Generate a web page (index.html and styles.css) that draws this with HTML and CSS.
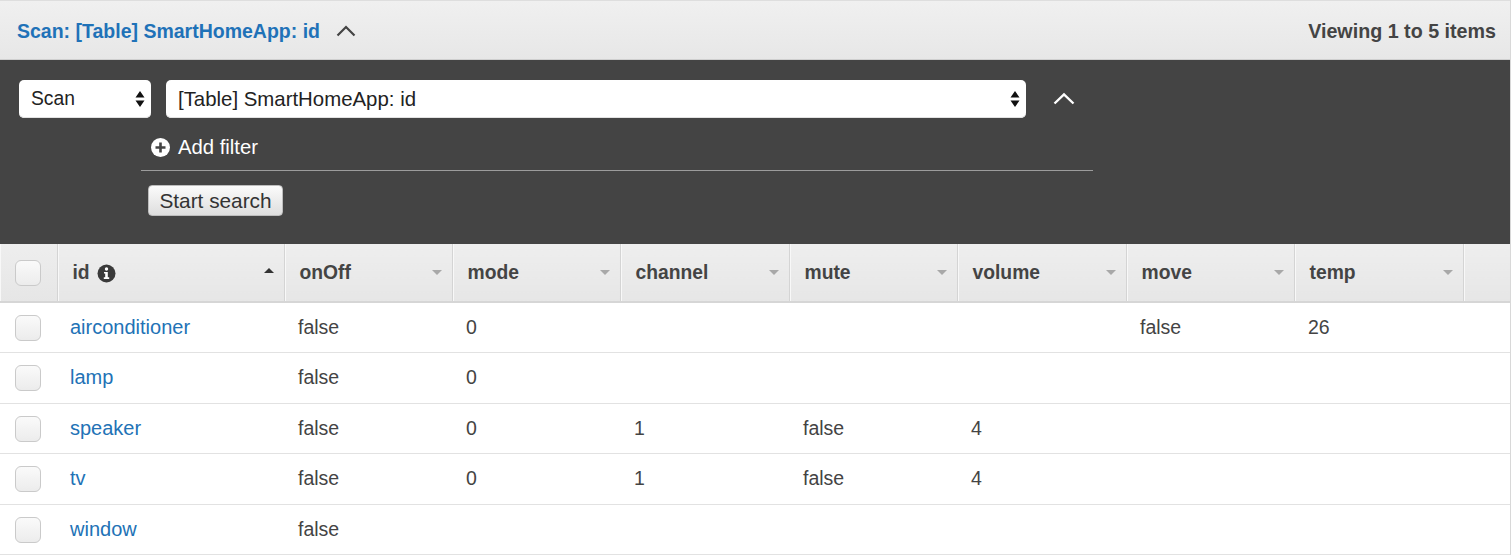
FILE: index.html
```html
<!DOCTYPE html>
<html lang="en">
<head>
<meta charset="utf-8">
<title>Scan: [Table] SmartHomeApp: id</title>
<link rel="stylesheet" href="styles.css">
</head>
<body>
<div class="app">
  <header class="topbar">
    <div class="title">
      <span class="title-text">Scan: [Table] SmartHomeApp: id</span>
      <svg class="chev-dark" width="20" height="12" viewBox="0 0 20 12"><path d="M1.5 10.5 L10 2 L18.5 10.5" fill="none" stroke="#444" stroke-width="2.2"/></svg>
    </div>
    <div class="count">Viewing 1 to 5 items</div>
  </header>

  <section class="query">
    <div class="query-row">
      <div class="select select-op">
        <span>Scan</span>
        <svg class="updown" width="10" height="18" viewBox="0 0 10 18"><path d="M5 1 L9.5 7.5 H0.5 Z M5 17 L9.5 10.5 H0.5 Z" fill="#111"/></svg>
      </div>
      <div class="select select-table">
        <span>[Table] SmartHomeApp: id</span>
        <svg class="updown" width="10" height="18" viewBox="0 0 10 18"><path d="M5 1 L9.5 7.5 H0.5 Z M5 17 L9.5 10.5 H0.5 Z" fill="#111"/></svg>
      </div>
      <svg class="chev-light" width="22" height="13" viewBox="0 0 22 13"><path d="M1.5 11.5 L11 2.5 L20.5 11.5" fill="none" stroke="#fff" stroke-width="2.4"/></svg>
    </div>
    <div class="filters">
      <div class="add-filter">
        <svg width="19" height="19" viewBox="0 0 19 19"><circle cx="9.5" cy="9.5" r="9.5" fill="#fff"/><path d="M9.5 4.5 V14.5 M4.5 9.5 H14.5" stroke="#444" stroke-width="2.6"/></svg>
        <span>Add filter</span>
      </div>
      <div class="divider"></div>
      <button class="btn">Start search</button>
    </div>
  </section>

  <table class="grid">
    <colgroup>
      <col style="width:57px">
      <col style="width:227px">
      <col style="width:168px">
      <col style="width:168px">
      <col style="width:169px">
      <col style="width:168px">
      <col style="width:169px">
      <col style="width:168px">
      <col style="width:169px">
      <col>
    </colgroup>
    <thead>
      <tr>
        <th class="cb-cell"><span class="cb"></span></th>
        <th><div class="th"><span class="th-label">id <svg class="info" width="19" height="19" viewBox="0 0 19 19"><circle cx="9.5" cy="9.5" r="9" fill="#3a3a3a"/><circle cx="9.5" cy="5" r="1.7" fill="#fff"/><path d="M7 8 H10.8 V13.3 H12.2 V15 H6.8 V13.3 H8.2 V9.6 H7 Z" fill="#fff"/></svg></span><span class="sort up"></span></div></th>
        <th><div class="th"><span class="th-label">onOff</span><span class="sort"></span></div></th>
        <th><div class="th"><span class="th-label">mode</span><span class="sort"></span></div></th>
        <th><div class="th"><span class="th-label">channel</span><span class="sort"></span></div></th>
        <th><div class="th"><span class="th-label">mute</span><span class="sort"></span></div></th>
        <th><div class="th"><span class="th-label">volume</span><span class="sort"></span></div></th>
        <th><div class="th"><span class="th-label">move</span><span class="sort"></span></div></th>
        <th><div class="th"><span class="th-label">temp</span><span class="sort"></span></div></th>
        <th class="th-extra"></th>
      </tr>
    </thead>
    <tbody>
      <tr>
        <td class="cb-cell"><span class="cb"></span></td>
        <td class="id-cell"><a class="link" href="#">airconditioner</a></td>
        <td>false</td><td>0</td><td></td><td></td><td></td><td>false</td><td>26</td><td></td>
      </tr>
      <tr>
        <td class="cb-cell"><span class="cb"></span></td>
        <td class="id-cell"><a class="link" href="#">lamp</a></td>
        <td>false</td><td>0</td><td></td><td></td><td></td><td></td><td></td><td></td>
      </tr>
      <tr>
        <td class="cb-cell"><span class="cb"></span></td>
        <td class="id-cell"><a class="link" href="#">speaker</a></td>
        <td>false</td><td>0</td><td>1</td><td>false</td><td>4</td><td></td><td></td><td></td>
      </tr>
      <tr>
        <td class="cb-cell"><span class="cb"></span></td>
        <td class="id-cell"><a class="link" href="#">tv</a></td>
        <td>false</td><td>0</td><td>1</td><td>false</td><td>4</td><td></td><td></td><td></td>
      </tr>
      <tr>
        <td class="cb-cell"><span class="cb"></span></td>
        <td class="id-cell"><a class="link" href="#">window</a></td>
        <td>false</td><td></td><td></td><td></td><td></td><td></td><td></td><td></td>
      </tr>
    </tbody>
  </table>
</div>
</body>
</html>
```

FILE: styles.css
```css
* { box-sizing: border-box; }

html, body {
  margin: 0;
  padding: 0;
  background: #fff;
}

body {
  font-family: "Liberation Sans", Arial, Helvetica, sans-serif;
  font-size: 19.5px;
  color: #444;
}

.app {
  width: 1511px;
  border-right: 1px solid #d8d8d8;
}

/* top bar */
.topbar {
  height: 60px;
  display: flex;
  align-items: center;
  justify-content: space-between;
  padding: 0 14px 0 17px;
  border-top: 1px solid #dedede;
  border-bottom: 1px solid #cfcfcf;
  background: linear-gradient(#f0f0f0, #e7e7e7);
}

.title {
  display: flex;
  align-items: center;
  gap: 16px;
  padding-top: 3px;
}

.title-text {
  color: #1f72b8;
  font-weight: bold;
  font-size: 19.5px;
}

.chev-dark { margin-top: -1px; }

.count {
  font-weight: bold;
  font-size: 19.7px;
  color: #444;
  padding-top: 2px;
}

/* query panel */
.query {
  background: #444;
  padding: 20px 19px 27px;
  height: 184px;
}

.query-row {
  display: flex;
  align-items: center;
  gap: 15px;
  height: 38px;
}

.select {
  height: 38px;
  background: #fff;
  border-radius: 5px;
  display: flex;
  align-items: center;
  justify-content: space-between;
  padding: 0 6px 0 12px;
  color: #222;
  box-shadow: inset 0 -1px 0 #e2e2e2;
}

.select-op { width: 132px; font-size: 19.3px; }
.select-table { width: 860px; font-size: 20.4px; }

.chev-light { margin-left: 12px; margin-top: -1px; }

.filters {
  margin-left: 122px;
  width: 952px;
}

.add-filter {
  margin-top: 10px;
  height: 38px;
  display: flex;
  align-items: center;
  gap: 8px;
  padding-left: 10px;
  color: #fff;
  font-size: 20.3px;
}

.divider {
  margin-top: 4px;
  height: 1px;
  background: #9c9c9c;
}

.btn {
  margin: 14px 0 0 7px;
  height: 31px;
  width: 135px;
  padding: 0;
  font-family: inherit;
  font-size: 20.8px;
  color: #333;
  border: 1px solid #bdbdbd;
  border-radius: 4px;
  background: linear-gradient(#fbfbfb, #dedede);
}

/* grid */
.grid {
  width: 1510px;
  border-collapse: collapse;
  table-layout: fixed;
}

.grid th {
  height: 58px;
  padding: 0;
  text-align: left;
  font-weight: bold;
  font-size: 19.3px;
  color: #444;
  background: linear-gradient(#eeeeee, #e6e6e6);
  border-bottom: 2px solid #d6d6d6;
  border-right: 1px solid #d4d4d4;
  box-shadow: inset 1px 0 0 #f8f8f8;
}

.grid th.th-extra { border-right: none; }

.th {
  display: flex;
  align-items: center;
  justify-content: space-between;
  padding: 0 10px 0 15px;
}

.th-label {
  display: flex;
  align-items: center;
  gap: 7px;
}

.info { margin-top: 1px; }

.sort {
  width: 0;
  height: 0;
  border-left: 5px solid transparent;
  border-right: 5px solid transparent;
  border-top: 5px solid #a8a8a8;
}

.sort.up {
  border-top: none;
  border-bottom: 5px solid #333;
  margin-top: -4px;
}

.grid td {
  height: 50.5px;
  padding: 0 0 0 14px;
  border-bottom: 1px solid #e2e2e2;
  color: #444;
  white-space: nowrap;
}

.grid td.id-cell {
  padding-left: 13px;
  font-size: 20px;
}

.grid .cb-cell {
  padding: 0 0 0 15px;
}

.grid th.cb-cell {
  padding-left: 15px;
}

.cb {
  display: block;
  width: 26px;
  height: 26px;
  border: 1px solid #cacaca;
  border-radius: 6px;
  background: linear-gradient(#fafafa, #ececec);
}

.grid td.cb-cell .cb { margin-top: 1px; }

.link {
  color: #2272b6;
  text-decoration: none;
}
```
